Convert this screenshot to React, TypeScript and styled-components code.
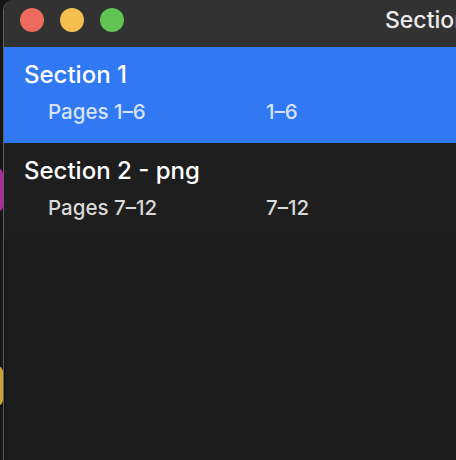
import React from "react";
import styled, { createGlobalStyle } from "styled-components";

const GlobalStyle = createGlobalStyle`
    html, body {
        margin: 0;
        padding: 0;
        background: #151515;
        overflow: hidden;
    }
    body {
        font-family: Inter, "Noto Sans", sans-serif;
        -webkit-font-smoothing: antialiased;
    }
`;

const Desktop = styled.div`
    position: relative;
    display: flex;
    width: 456px;
    height: 460px;
    overflow: hidden;
    background: #161616;
`;

const DesktopIcon = styled.div<{ $top: number; $height: number; $color: string }>`
    position: absolute;
    left: -14px;
    top: ${(p) => p.$top}px;
    width: 17px;
    height: ${(p) => p.$height}px;
    border-radius: 6px;
    background: ${(p) => p.$color};
`;

const Window = styled.div`
    flex: 1;
    min-width: 0;
    margin-left: 3px;
    display: flex;
    flex-direction: column;
    background: #1b1b1b;
    border-left: 1px solid #5e5e5e;
    border-top-left-radius: 10px;
    box-shadow: inset 1px 0 0 #0e0e0e;
    overflow: hidden;
`;

const TitleBar = styled.div`
    height: 47px;
    flex-shrink: 0;
    display: flex;
    align-items: center;
    padding-left: 16px;
    background: #323232;
    white-space: nowrap;
    overflow: hidden;
`;

const TrafficLights = styled.div`
    display: flex;
    gap: 16px;
    margin-top: -7px;
`;

const Light = styled.span<{ $color: string }>`
    width: 24px;
    height: 24px;
    border-radius: 50%;
    background: ${(p) => p.$color};
`;

const Title = styled.span`
    margin-left: 261px;
    margin-top: -7px;
    color: #ececec;
    font-size: 23px;
    font-weight: 500;
`;

const SectionList = styled.div`
    display: flex;
    flex-direction: column;
`;

const SectionRow = styled.div<{ $selected?: boolean }>`
    height: 96px;
    box-sizing: border-box;
    padding: 13px 0 0 20px;
    background: ${(p) => (p.$selected ? "#3179f3" : "#1e1e1e")};
`;

const SectionName = styled.div`
    color: #ffffff;
    font-size: 24px;
    font-weight: 500;
    line-height: 30px;
`;

const PageRow = styled.div<{ $selected?: boolean }>`
    display: grid;
    grid-template-columns: 218px auto;
    padding-left: 24px;
    margin-top: 10px;
    font-size: 20.5px;
    font-weight: 500;
    line-height: 24px;
    color: ${(p) => (p.$selected ? "#d6e3fb" : "#d9d9d9")};
`;

interface Section {
    name: string;
    pages: string;
    range: string;
}

const SECTIONS: Section[] = [
    { name: "Section 1", pages: "Pages 1–6", range: "1–6" },
    { name: "Section 2 - png", pages: "Pages 7–12", range: "7–12" },
];

export default function App() {
    const selected = 0;
    return (
        <>
            <GlobalStyle />
            <Desktop>
                <DesktopIcon $top={168} $height={44} $color="#b0279f" />
                <DesktopIcon $top={366} $height={40} $color="#c9a233" />
                <Window>
                    <TitleBar>
                        <TrafficLights>
                            <Light $color="#ee6a5e" />
                            <Light $color="#f5bf4f" />
                            <Light $color="#61c454" />
                        </TrafficLights>
                        <Title>Sections</Title>
                    </TitleBar>
                    <SectionList>
                        {SECTIONS.map((s, i) => (
                            <SectionRow key={s.name} $selected={i === selected}>
                                <SectionName>{s.name}</SectionName>
                                <PageRow $selected={i === selected}>
                                    <span>{s.pages}</span>
                                    <span>{s.range}</span>
                                </PageRow>
                            </SectionRow>
                        ))}
                    </SectionList>
                </Window>
            </Desktop>
        </>
    );
}
